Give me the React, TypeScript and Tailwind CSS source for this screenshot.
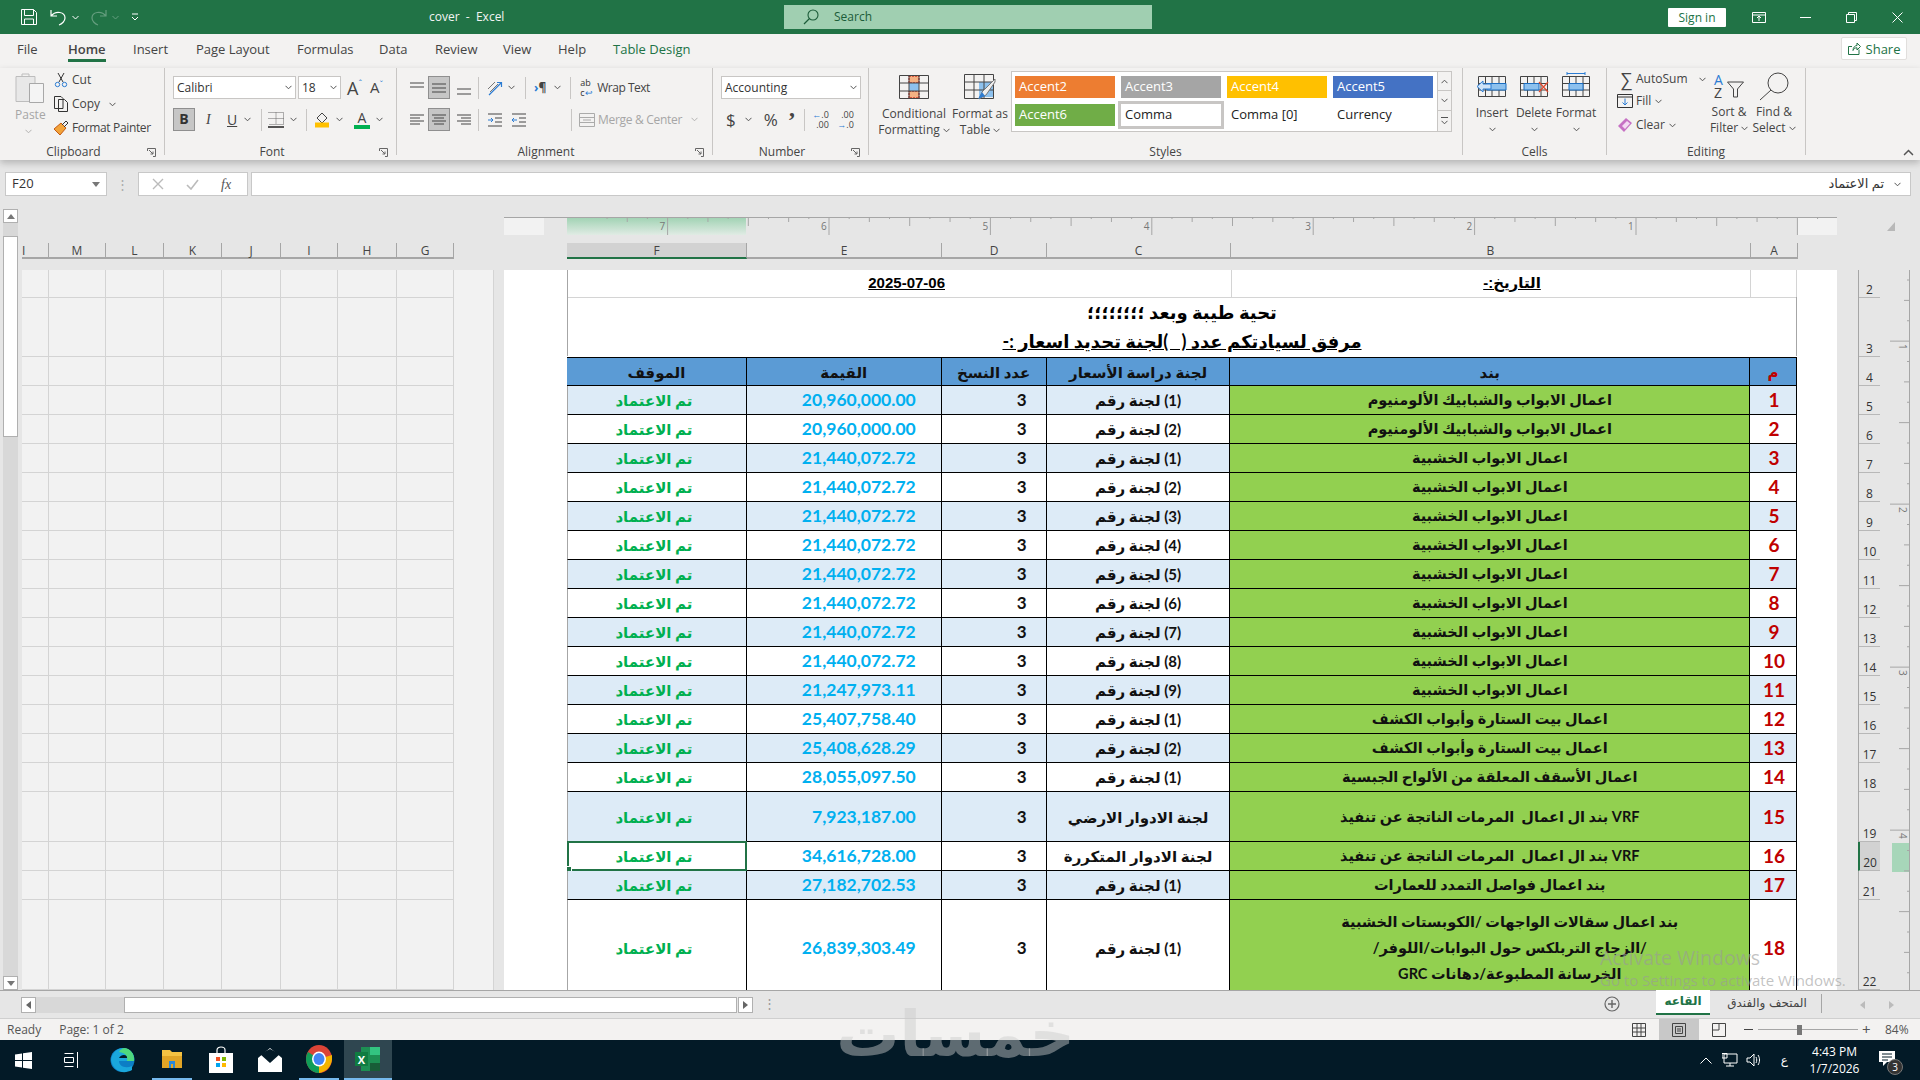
import type { ReactNode } from "react";

const ROW_H = [28, 59, 29, 29, 29, 29, 29, 29, 29, 29, 29, 29, 29, 29, 29, 29, 29, 50, 29, 29, 90];
const ROW_NUMS = [2, 3, 4, 5, 6, 7, 8, 9, 10, 11, 12, 13, 14, 15, 16, 17, 18, 19, 20, 21, 22];
const LEFT_COLS = [["I", 27], ["M", 57], ["L", 58], ["K", 58], ["J", 59], ["I", 57], ["H", 59], ["G", 57]] as const;
const RIGHT_COLS = [["F", 180], ["E", 195], ["D", 105], ["C", 184], ["B", 520], ["A", 47]] as const;
const DOORS = "اعمال الابواب الخشبية";
const ALU = "اعمال الابواب والشبابيك الألومنيوم";
const KASHF = "اعمال بيت الستارة وأبواب الكشف";
const VRF = "VRF بند ال اعمال  المرمات الناتجة عن تنفيذ";

const ROWS: { b: ReactNode; c: string; e: string; h: string; shift?: boolean }[] = [
  { b: ALU, c: "(1) لجنة رقم", e: "20,960,000.00", h: "h-[29px]" },
  { b: ALU, c: "(2) لجنة رقم", e: "20,960,000.00", h: "h-[29px]" },
  { b: DOORS, c: "(1) لجنة رقم", e: "21,440,072.72", h: "h-[29px]" },
  { b: DOORS, c: "(2) لجنة رقم", e: "21,440,072.72", h: "h-[29px]" },
  { b: DOORS, c: "(3) لجنة رقم", e: "21,440,072.72", h: "h-[29px]" },
  { b: DOORS, c: "(4) لجنة رقم", e: "21,440,072.72", h: "h-[29px]" },
  { b: DOORS, c: "(5) لجنة رقم", e: "21,440,072.72", h: "h-[29px]" },
  { b: DOORS, c: "(6) لجنة رقم", e: "21,440,072.72", h: "h-[29px]" },
  { b: DOORS, c: "(7) لجنة رقم", e: "21,440,072.72", h: "h-[29px]" },
  { b: DOORS, c: "(8) لجنة رقم", e: "21,440,072.72", h: "h-[29px]" },
  { b: DOORS, c: "(9) لجنة رقم", e: "21,247,973.11", h: "h-[29px]" },
  { b: KASHF, c: "(1) لجنة رقم", e: "25,407,758.40", h: "h-[29px]" },
  { b: KASHF, c: "(2) لجنة رقم", e: "25,408,628.29", h: "h-[29px]" },
  { b: "اعمال الأسقف المعلقة من الألواح الجبسية", c: "(1) لجنة رقم", e: "28,055,097.50", h: "h-[29px]" },
  { b: VRF, c: "لجنة الادوار الارضي", e: "7,923,187.00", h: "h-[50px]" },
  { b: VRF, c: "لجنة الادوار المتكررة", e: "34,616,728.00", h: "h-[29px]" },
  { b: "بند اعمال فواصل التمدد للعمارات", c: "(1) لجنة رقم", e: "27,182,702.53", h: "h-[29px]" },
  {
    b: (
      <>
        بند اعمال سقالات الواجهات /الكوبستات الخشبية
        <br />
        /الزجاج التربلكس حول البوابات/اللوفر/
        <br />
        الخرسانة المطبوعة/دهانات GRC
      </>
    ),
    c: "(1) لجنة رقم",
    e: "26,839,303.49",
    h: "h-[96px]",
    shift: true,
  },
];

function Caret({ className = "" }: { className?: string }) {
  return (
    <svg width="7" height="5" viewBox="0 0 7 5" className={className}>
      <path d="M.5 .8 3.5 3.8 6.5 .8" fill="none" stroke="#555" strokeWidth="1" />
    </svg>
  );
}

function Launcher() {
  return (
    <svg width="9" height="9" viewBox="0 0 9 9">
      <path d="M.5 3V.5H8.5V8.5H6M2 2 6 6M6 3.5V6H3.5" fill="none" stroke="#666" strokeWidth="1" />
    </svg>
  );
}

function Group({ label, w, launcher, children }: { label: string; w: string; launcher?: boolean; children: ReactNode }) {
  return (
    <div className={`${w} h-[87px] shrink-0 flex flex-col border-r border-[#c8c6c4]`}>
      <div className="h-[76px]">{children}</div>
      <div className="h-[11px] flex text-[12px] leading-[16px] text-[#444]">
        <span className="flex-1 text-center">{label}</span>
        {launcher && (
          <span className="w-[17px] pt-[4px]">
            <Launcher />
          </span>
        )}
      </div>
    </div>
  );
}

function Lines({ ys, widths }: { ys: number[]; widths: [number, number][] }) {
  return (
    <svg width="16" height="16" viewBox="0 0 16 16">
      {ys.map((y, i) => (
        <line key={i} x1={widths[i][0]} x2={widths[i][1]} y1={y} y2={y} stroke="#444" strokeWidth="1" />
      ))}
    </svg>
  );
}

function AlignBtn({ active, children, className = "" }: { active?: boolean; children: ReactNode; className?: string }) {
  return (
    <div
      className={`w-[22px] h-[23px] flex items-center justify-center ${
        active ? "bg-[#c6c6c6] border border-[#8f8f8f]" : ""
      } ${className}`}
    >
      {children}
    </div>
  );
}

function Sep({ className = "" }: { className?: string }) {
  return <div className={`w-px h-[22px] bg-[#c8c6c4] ${className}`} />;
}

function SheetGridIcon({ children }: { children: ReactNode }) {
  return (
    <svg width="30" height="26" viewBox="0 0 30 26">
      <path
        d="M1.5 4.5H28.500V24.500H1.500ZM1.500 11.500H28.500M1.500 18H28.500M8.500 4.500V24.500M15 4.500V24.500M22 4.500V24.500"
        fill="none"
        stroke="#444"
        strokeWidth="1"
      />
      {children}
    </svg>
  );
}

function TitleBar() {
  return (
    <div className="h-[34px] shrink-0 bg-[#217346] flex items-center text-white text-[12px] relative">
      <svg width="16" height="16" viewBox="0 0 16 16" className="ml-[21px]">
        <path
          d="M.5 .5H12.5L15.5 3.5V15.5H.5ZM3.5 .5V6.5H12.5V.5M3.5 15.5V10H12.5V15.5"
          fill="none"
          stroke="#fff"
          strokeWidth="1"
        />
      </svg>
      <svg width="16" height="17" viewBox="0 0 16 17" className="ml-[13px]">
        <path d="M1 1V7H7M1 7C6 1 15 3 15 9C15 12 12 15 9 16" fill="none" stroke="#fff" strokeWidth="1.2" />
      </svg>
      <svg width="7" height="5" viewBox="0 0 7 5" className="ml-[6px]">
        <path d="M.5 1 3.5 4 6.5 1" fill="none" stroke="#fff" />
      </svg>
      <svg width="16" height="17" viewBox="0 0 16 17" className="ml-[12px] opacity-30">
        <path d="M15 1V7H9M15 7C10 1 1 3 1 9C1 12 4 15 7 16" fill="none" stroke="#fff" strokeWidth="1.2" />
      </svg>
      <svg width="7" height="5" viewBox="0 0 7 5" className="ml-[5px] opacity-30">
        <path d="M.5 1 3.5 4 6.5 1" fill="none" stroke="#fff" />
      </svg>
      <svg width="8" height="8" viewBox="0 0 8 8" className="ml-[12px]">
        <path d="M1 1H7M1 4 4 7 7 4" fill="none" stroke="#fff" />
      </svg>
      <span className="ml-[290px] w-[355px] whitespace-pre text-[12px] text-[#f3f3f3]">cover  -  Excel</span>
      <div className="w-[368px] h-[24px] bg-[#a0cfb1] flex items-center text-[#1c5c39] text-[12px]">
        <svg width="16" height="16" viewBox="0 0 16 16" className="ml-[19px]" fill="none" stroke="#1c5c39">
          <circle cx="10" cy="6" r="5" strokeWidth="1.1" />
          <path d="M6.5 9.5 1 15" strokeWidth="1.2" />
        </svg>
        <span className="ml-[15px]">Search</span>
      </div>
      <div className="ml-[516px] w-[58px] h-[19px] bg-white rounded-[1px] text-[#217346] text-[12px] leading-[19px] text-center">
        Sign in
      </div>
      <svg width="14" height="11" viewBox="0 0 14 11" className="ml-[26px]" fill="none" stroke="#fff">
        <path d="M.5 .5H13.5V10.5H.5ZM.5 3H13.5M7 9V4.5M5 6 7 4 9 6" />
      </svg>
      <div className="ml-[34px] w-[11px] h-px bg-white" />
      <svg width="11" height="11" viewBox="0 0 11 11" className="ml-[35px]" fill="none" stroke="#fff">
        <path d="M.5 2.5H8.5V10.5H.5ZM2.5 2.5V.5H10.5V8.5H8.5" />
      </svg>
      <svg width="11" height="11" viewBox="0 0 11 11" className="ml-[35px]" fill="none" stroke="#fff">
        <path d="M.5 .5 10.5 10.5M10.5 .5 .5 10.5" />
      </svg>
    </div>
  );
}

function TabBar() {
  const tabs: [string, string][] = [
    ["File", "w-[51px]"],
    ["Home", "w-[65px]"],
    ["Insert", "w-[63px]"],
    ["Page Layout", "w-[101px]"],
    ["Formulas", "w-[82px]"],
    ["Data", "w-[56px]"],
    ["Review", "w-[68px]"],
    ["View", "w-[55px]"],
    ["Help", "w-[55px]"],
  ];
  return (
    <div className="h-[34px] shrink-0 bg-[#f3f2f1] flex text-[13px] leading-[30px] text-[#444] pl-[17px]">
      {tabs.map(([t, w]) =>
        t === "Home" ? (
          <div key={t} className={w}>
            <div className="inline-block h-[28px] border-b-[3px] border-[#217346] font-semibold">{t}</div>
          </div>
        ) : (
          <div key={t} className={w}>
            {t}
          </div>
        ),
      )}
      <div className="text-[#217346]">Table Design</div>
      <div className="ml-auto mr-[13px] mt-[3px] w-[66px] h-[23px] bg-white border border-[#e1dfdd] rounded-[2px] flex items-center justify-center gap-[5px] text-[#217346] text-[13px] leading-[20px]">
        <svg width="13" height="13" viewBox="0 0 13 13" fill="none" stroke="#217346">
          <path d="M11 7.5V12.5H.5V4.5H4M5 8.5C5 5.5 7 3.5 9 3.5V1L12.5 4.5 9 8V5.8C7 5.8 6 6.5 5 8.5Z" />
        </svg>
        Share
      </div>
    </div>
  );
}

function Ribbon() {
  return (
    <div className="h-[92px] shrink-0 bg-[#f3f2f1] flex text-[12px] text-[#444] leading-[16px] shadow-[0_3px_7px_rgba(0,0,0,0.22)] relative z-10">
      <Group label="Clipboard" w="w-[165px]" launcher>
        <div className="flex pl-[15px]">
          <div className="w-[38px] flex flex-col items-start text-[#a6a6a6]">
            <svg width="29" height="31" viewBox="0 0 29 31" className="mt-[4px]" fill="none" stroke="#bdbdbd">
              <path d="M1 4.5H20V29.5H1Z" fill="#e8e8e8" />
              <path d="M7 4.5V2H14V4.5" />
              <path d="M14.5 11.5H28.5V30.5H14.5Z" fill="#f4f4f4" stroke="#a8a8a8" />
            </svg>
            <span className="mt-[4px]">Paste</span>
            <Caret className="mt-[6px] ml-[10px] opacity-40" />
          </div>
          <div className="flex flex-col">
            <div className="h-[24px] flex items-center">
              <svg width="16" height="16" viewBox="0 0 16 16" fill="none" stroke="#333" strokeWidth="1">
                <path d="M5 1 10 10M11 1 6 10" />
                <circle cx="4.5" cy="12.5" r="2.2" stroke="#2b7cd3" />
                <circle cx="11.5" cy="12.5" r="2.2" stroke="#2b7cd3" />
              </svg>
              <span className="ml-[3px]">Cut</span>
            </div>
            <div className="h-[24px] flex items-center">
              <svg width="16" height="16" viewBox="0 0 16 16" fill="none" stroke="#333">
                <path d="M1.5 .5H8L10 2.5V12.5H1.5ZM5.5 3.5H11.5L14.5 6.5V15.5H5.5Z" fill="#f3f2f1" />
              </svg>
              <span className="ml-[3px]">Copy</span>
              <Caret className="ml-[9px]" />
            </div>
            <div className="h-[24px] flex items-center">
              <svg width="16" height="16" viewBox="0 0 16 16">
                <path d="M1 9 8 3 13 8 7 15Z" fill="#f2a33a" stroke="#c55a11" />
                <path d="M9 5 13 1 15 3 11 7" fill="none" stroke="#333" />
              </svg>
              <span className="ml-[3px] whitespace-nowrap tracking-[-0.35px]">Format Painter</span>
            </div>
          </div>
        </div>
      </Group>

      <Group label="Font" w="w-[232px]" launcher>
        <div className="pl-[8px] pt-[8px] flex flex-col gap-[9px]">
          <div className="flex items-center h-[23px]">
            <div className="w-[123px] h-[23px] bg-white border border-[#c8c6c4] flex items-center justify-between px-[3px] text-[#333]">
              Calibri <Caret />
            </div>
            <div className="ml-[2px] w-[43px] h-[23px] bg-white border border-[#c8c6c4] flex items-center justify-between px-[3px] text-[#333]">
              18 <Caret />
            </div>
            <span className="ml-[6px] text-[18px] leading-none text-[#444] relative">
              A<span className="text-[#2b7cd3] text-[9px] align-top">ˆ</span>
            </span>
            <span className="ml-[8px] text-[15px] leading-none text-[#444] relative">
              A<span className="text-[#2b7cd3] text-[9px] align-top">ˇ</span>
            </span>
          </div>
          <div className="flex items-center h-[23px]">
            <div className="w-[22px] h-[23px] bg-[#c6c6c6] border border-[#8f8f8f] text-center font-bold text-[14px] leading-[20px] text-[#333]">
              B
            </div>
            <span className="ml-[11px] italic text-[14px] w-[8px] font-['Liberation_Serif',serif]">I</span>
            <span className="ml-[13px] underline text-[14px] w-[9px]">U</span>
            <Caret className="ml-[8px]" />
            <Sep className="ml-[10px]" />
            <svg width="16" height="16" viewBox="0 0 16 16" className="ml-[6px]">
              <path d="M.5 .5H15.5V12.5H.5M8 .5V12.5M.5 6.5H15.5" fill="none" stroke="#666" strokeDasharray="1 1" />
              <path d="M0 15H16" stroke="#111" strokeWidth="1.4" />
            </svg>
            <Caret className="ml-[6px]" />
            <Sep className="ml-[9px]" />
            <svg width="16" height="18" viewBox="0 0 16 18" className="ml-[7px]">
              <path d="M3 7 8 2 13 7 8 12Z" fill="none" stroke="#444" />
              <path d="M1 14H15" stroke="#ffc000" strokeWidth="5" />
            </svg>
            <Caret className="ml-[6px]" />
            <div className="ml-[11px] w-[16px] flex flex-col items-center">
              <span className="text-[14px] leading-[14px] text-[#444]">A</span>
              <div className="w-[16px] h-[4px] bg-[#00b050]" />
            </div>
            <Caret className="ml-[6px]" />
          </div>
        </div>
      </Group>

      <Group label="Alignment" w="w-[316px]" launcher>
        <div className="pl-[9px] pt-[8px] flex flex-col gap-[9px]">
          <div className="flex items-center h-[23px]">
            <AlignBtn>
              <Lines ys={[3, 7]} widths={[[1, 15], [1, 15]]} />
            </AlignBtn>
            <AlignBtn active>
              <Lines ys={[4, 8, 12]} widths={[[1, 15], [1, 15], [1, 15]]} />
            </AlignBtn>
            <AlignBtn className="ml-[3px]">
              <Lines ys={[9, 14]} widths={[[1, 15], [1, 15]]} />
            </AlignBtn>
            <Sep className="ml-[3px]" />
            <svg width="16" height="16" viewBox="0 0 16 16" className="ml-[8px]" fill="none">
              <path d="M1 9 8 2M3 12 11 4" stroke="#777" />
              <path d="M2 15 14 3M10 2.5H14.5V7" stroke="#2b7cd3" strokeWidth="1.2" />
            </svg>
            <Caret className="ml-[5px]" />
            <Sep className="ml-[10px]" />
            <span className="ml-[8px] text-[12px] font-bold leading-none">
              <span className="text-[#2b7cd3]">›</span>¶
            </span>
            <Caret className="ml-[8px]" />
            <Sep className="ml-[9px]" />
            <span className="ml-[9px] text-[9px] leading-[10px] w-[17px] text-[#333]">
              ab
              <br />c<span className="text-[#2b7cd3]">↩</span>
            </span>
            <span className="tracking-[-0.5px]">Wrap Text</span>
          </div>
          <div className="flex items-center h-[23px]">
            <AlignBtn>
              <Lines ys={[3, 6, 9, 12]} widths={[[1, 15], [1, 11], [1, 15], [1, 11]]} />
            </AlignBtn>
            <AlignBtn active>
              <Lines ys={[3, 6, 9, 12]} widths={[[1, 15], [3, 13], [1, 15], [3, 13]]} />
            </AlignBtn>
            <AlignBtn className="ml-[3px]">
              <Lines ys={[3, 6, 9, 12]} widths={[[1, 15], [5, 15], [1, 15], [5, 15]]} />
            </AlignBtn>
            <Sep className="ml-[3px]" />
            <svg width="16" height="14" viewBox="0 0 16 14" className="ml-[8px]" fill="none">
              <path d="M1 1H15M8 5H15M8 9H15M1 13H15" stroke="#444" />
              <path d="M1 7H6M4 5 6 7 4 9" stroke="#2b7cd3" />
            </svg>
            <svg width="16" height="14" viewBox="0 0 16 14" className="ml-[8px]" fill="none">
              <path d="M1 1H15M8 5H15M8 9H15M1 13H15" stroke="#444" />
              <path d="M6 7H1M3 5 1 7 3 9" stroke="#2b7cd3" />
            </svg>
            <Sep className="ml-[44px]" />
            <svg width="16" height="14" viewBox="0 0 16 14" className="ml-[7px] opacity-50" fill="none" stroke="#666">
              <path d="M.5 .5H15.5V13.5H.5ZM.5 4.5H15.5M.5 9.5H15.5M4 7H12" />
            </svg>
            <span className="ml-[3px] text-[#a6a6a6] whitespace-nowrap tracking-[-0.3px]">Merge &amp; Center</span>
            <Caret className="ml-[9px] opacity-40" />
          </div>
        </div>
      </Group>

      <Group label="Number" w="w-[156px]" launcher>
        <div className="pl-[8px] pt-[8px] flex flex-col gap-[9px]">
          <div className="w-[140px] h-[23px] bg-white border border-[#c8c6c4] flex items-center justify-between px-[3px] text-[#333]">
            Accounting <Caret />
          </div>
          <div className="flex items-center h-[23px] text-[#444]">
            <span className="ml-[5px] text-[17px] leading-none">$</span>
            <Caret className="ml-[9px]" />
            <span className="ml-[12px] text-[17px] leading-none">%</span>
            <span className="ml-[10px] text-[24px] font-bold leading-[12px] font-['Liberation_Serif',serif]">’</span>
            <Sep className="ml-[8px]" />
            <span className="ml-[7px] text-[9px] leading-[10px] w-[17px] text-right">
              <span className="text-[#2b7cd3]">←</span>.0
              <br />
              .00
            </span>
            <span className="ml-[8px] text-[9px] leading-[10px] w-[17px] text-right">
              .00
              <br />
              <span className="text-[#2b7cd3]">→</span>.0
            </span>
          </div>
        </div>
      </Group>

      <Group label="Styles" w="w-[594px]">
        <div className="flex h-full">
          <div className="ml-[15px] w-[60px] flex flex-col items-center">
            <svg width="30" height="24" viewBox="0 0 30 24" className="mt-[7px]">
              <path d="M10 1H20V8H10ZM10 16H20V23H10Z" fill="#f4b183" stroke="#c00000" strokeDasharray="2 1" />
              <path d="M10 8H20V16H10Z" fill="#8dc1ee" />
              <path d="M.5 .5H29.5V23.5H.5ZM.5 8H29.5M.5 16H29.5M10 .5V23.5M20 .5V23.5" fill="none" stroke="#444" />
            </svg>
            <span className="mt-[7px]">Conditional</span>
            <span className="whitespace-nowrap flex items-center gap-[3px]">
              Formatting <Caret />
            </span>
          </div>
          <div className="ml-[6px] w-[60px] flex flex-col items-center">
            <svg width="32" height="26" viewBox="0 0 32 26" className="mt-[6px]">
              <path d="M15 8H22V23H15ZM22 8H30V23H22Z" fill="#8dc1ee" />
              <path d="M.5 .5H29.5V24.5H.5ZM.5 8H29.5M.5 16H29.5M10 .5V24.5M20 .5V24.5" fill="none" stroke="#444" />
              <path d="M31 5 18 18 15 25 22 21 31 8Z" fill="#eee" stroke="#777" />
              <path d="M18 18 14 25 21 22Z" fill="#2b7cd3" />
            </svg>
            <span className="mt-[6px]">Format as</span>
            <span className="flex items-center gap-[3px]">
              Table <Caret />
            </span>
          </div>
          <div className="ml-[1px] mt-[3px] w-[441px] h-[61px] bg-white border border-[#c8c6c4] flex pl-[3px] pt-[4px] text-[13px] leading-[21px]">
            <div className="grid grid-cols-[100px_100px_100px_100px] gap-[6px] auto-rows-[22px]">
              <div className="bg-[#ed7d31] text-white pl-[4px]">Accent2</div>
              <div className="bg-[#a5a5a5] text-white pl-[4px]">Accent3</div>
              <div className="bg-[#ffc000] text-white pl-[4px]">Accent4</div>
              <div className="bg-[#4472c4] text-white pl-[4px]">Accent5</div>
              <div className="bg-[#70ad47] text-white pl-[4px]">Accent6</div>
              <div className="bg-white text-[#222] pl-[4px] outline-[3px] outline-[#c8c6c4]">Comma</div>
              <div className="text-[#222] pl-[4px]">Comma [0]</div>
              <div className="text-[#222] pl-[4px]">Currency</div>
            </div>
            <div className="ml-auto -mt-[5px] w-[15px] h-[61px] flex flex-col bg-[#f3f2f1] border-l border-[#c8c6c4] -mr-px">
              <div className="h-[20px] border border-l-0 border-[#c8c6c4] flex items-center justify-center">
                <Caret className="rotate-180" />
              </div>
              <div className="h-[19px] border-r border-[#c8c6c4] flex items-center justify-center">
                <Caret />
              </div>
              <div className="h-[22px] border border-l-0 border-[#c8c6c4] flex flex-col items-center justify-center gap-[2px]">
                <div className="w-[7px] h-px bg-[#555]" />
                <Caret />
              </div>
            </div>
          </div>
        </div>
      </Group>

      <Group label="Cells" w="w-[144px]">
        <div className="flex pl-[8px]">
          {[
            {
              t: "Insert",
              i: (
                <SheetGridIcon>
                  <path d="M10 11.500H29V18H10Z" fill="#8dc1ee" stroke="#1b6ec2" />
                  <path d="M0 14.500 6 9V12H14V17H6V20Z" fill="#cfe3f7" stroke="#2b7cd3" />
                </SheetGridIcon>
              ),
            },
            {
              t: "Delete",
              i: (
                <SheetGridIcon>
                  <path d="M5 11.500H20V18H5Z" fill="#8dc1ee" stroke="#1b6ec2" />
                  <path d="M20 10 29 20M29 10 20 20" stroke="#e0492e" strokeWidth="1.2" />
                </SheetGridIcon>
              ),
            },
            {
              t: "Format",
              i: (
                <SheetGridIcon>
                  <path d="M8 11.500H22V18H8Z" fill="#8dc1ee" stroke="#1b6ec2" />
                  <path d="M6 1.5H24M6 0V3M24 0V3" stroke="#2b7cd3" />
                </SheetGridIcon>
              ),
            },
          ].map(({ t, i }) => (
            <div key={t} className="w-[42px] flex flex-col items-center">
              <div className="mt-[4px] h-[30px]">{i}</div>
              <span className="mt-[3px]">{t}</span>
              <Caret className="mt-[6px]" />
            </div>
          ))}
        </div>
      </Group>

      <Group label="Editing" w="w-[199px]">
        <div className="flex pl-[10px]">
          <div className="w-[90px] flex flex-col">
            <div className="h-[22px] flex items-center">
              <span className="w-[19px] text-[18px] leading-none text-center text-[#444]">∑</span>
              <span>AutoSum</span>
              <Caret className="ml-[11px]" />
            </div>
            <div className="h-[22px] flex items-center">
              <svg width="16" height="14" viewBox="0 0 16 14" className="mr-[3px]" fill="none">
                <path d="M.5 .5H15.5V13.5H.5ZM.5 3H15.5" stroke="#333" />
                <path d="M8 4.5V11M5.5 8.5 8 11 10.5 8.5" stroke="#2b7cd3" />
              </svg>
              <span>Fill</span>
              <Caret className="ml-[4px]" />
            </div>
            <div className="h-[26px] flex items-center">
              <svg width="16" height="16" viewBox="0 0 16 16" className="mr-[3px]">
                <path d="M1 9 9 1 15 6 7 15Z" fill="#c671c4" />
                <path d="M5 9 10 4 13 6.5 8 12Z" fill="#f3d9f2" />
              </svg>
              <span>Clear</span>
              <Caret className="ml-[4px]" />
            </div>
          </div>
          <div className="w-[44px] flex flex-col items-center">
            <div className="mt-[5px] h-[27px] w-[30px] flex">
              <div className="w-[13px] flex flex-col text-[14px] leading-[13px]">
                <span className="text-[#2b7cd3]">A</span>
                <span className="text-[#444]">Z</span>
              </div>
              <svg width="17" height="27" viewBox="0 0 17 27" fill="none">
                <path d="M.5 9H16.5L10.500 16V24H6.500V16Z" stroke="#444" />
              </svg>
            </div>
            <span className="mt-[4px]">Sort &amp;</span>
            <span className="flex items-center gap-[3px]">
              Filter <Caret />
            </span>
          </div>
          <div className="w-[46px] flex flex-col items-center">
            <svg width="30" height="29" viewBox="0 0 30 29" className="mt-[4px]" fill="none" stroke="#444">
              <circle cx="19" cy="11" r="10" />
              <path d="M12 18 1 28" />
            </svg>
            <span className="mt-[3px]">Find &amp;</span>
            <span className="flex items-center gap-[3px]">
              Select <Caret />
            </span>
          </div>
        </div>
      </Group>
      <div className="flex-1 flex items-end justify-end pr-[8px] pb-[5px]">
        <Caret className="rotate-180 scale-150" />
      </div>
    </div>
  );
}

function FormulaBar() {
  return (
    <div className="h-[37px] shrink-0 bg-[#e6e6e6] pt-[12px] flex text-[13px] text-[#333]">
      <div className="ml-[5px] w-[102px] h-[24px] bg-white border border-[#c8c8c8] flex items-center justify-between px-[6px]">
        F20
        <span className="w-0 h-0 border-x-[4px] border-x-transparent border-t-[5px] border-t-[#777]" />
      </div>
      <div className="w-[31px] flex items-center justify-center text-[#aaa] tracking-tight">⋮</div>
      <div className="w-[110px] h-[24px] bg-white border border-[#c8c8c8] flex items-center pl-[13px] gap-[22px] text-[#b5b5b5]">
        <svg width="12" height="12" viewBox="0 0 12 12" fill="none" stroke="#bbb" strokeWidth="1.4">
          <path d="M1 1 11 11M11 1 1 11" />
        </svg>
        <svg width="13" height="11" viewBox="0 0 13 11" fill="none" stroke="#bbb" strokeWidth="1.6">
          <path d="M1 6 5 10 12 1" />
        </svg>
        <span className="italic text-[#555] font-['Liberation_Serif',serif] text-[14px]">fx</span>
      </div>
      <div className="ml-[3px] w-[1660px] h-[24px] bg-white border border-[#c8c8c8] flex items-center justify-end pr-[9px] text-[13px]">
        <span dir="rtl" className="font-['Noto_Sans','DejaVu_Sans',sans-serif]">
          تم الاعتماد
        </span>
        <Caret className="ml-[10px]" />
      </div>
    </div>
  );
}

function HRuler() {
  const ticks: ReactNode[] = [];
  for (let i = -3; i < 70; i++) {
    const x = 163.6 + (i * 161.4) / 8;
    if (x < 1 || x > 1332) continue;
    const h = i % 8 === 0 ? 18 : i % 4 === 0 ? 9 : i % 2 === 0 ? 5 : 2;
    ticks.push(<line key={i} x1={x} x2={x} y1={0} y2={h} stroke="#a6a6a6" />);
  }
  return (
    <svg width="1333" height="18" viewBox="0 0 1333 18" className="block">
      <rect x="0" y="0" width="40" height="18" fill="#f2f2f2" />
      <rect x="1293" y="0" width="40" height="18" fill="#f2f2f2" />
      <defs>
        <linearGradient id="sel" x1="0" y1="0" x2="0" y2="1">
          <stop offset="0" stopColor="#9fd2b2" />
          <stop offset="1" stopColor="#e0ebe4" />
        </linearGradient>
      </defs>
      <rect x="63" y="0" width="179" height="18" fill="url(#sel)" />
      <line x1="0" x2="1333" y1="0.5" y2="0.5" stroke="#a6a6a6" />
      {ticks}
      {[7, 6, 5, 4, 3, 2, 1].map((n, i) => (
        <text key={n} x={163.6 + i * 161.4 - 8} y="13" fontSize="10" fill="#777" fontFamily="Open Sans">
          {n}
        </text>
      ))}
    </svg>
  );
}

function VRuler() {
  const ticks: ReactNode[] = [];
  for (let i = 0; i < 36; i++) {
    const y = 10 + (i * 163) / 8;
    const k = i - 3;
    const w = k % 8 === 0 ? 19 : k % 4 === 0 ? 10 : k % 2 === 0 ? 5 : 2;
    ticks.push(<line key={i} x1={19 - w} x2={19} y1={y} y2={y} stroke="#a6a6a6" />);
  }
  return (
    <svg width="20" height="720" viewBox="0 0 20 720" className="block">
      <rect x="2" y="573" width="17" height="29" fill="#a7d6b9" />
      <line x1="19.5" x2="19.5" y1="0" y2="720" stroke="#a6a6a6" />
      {ticks}
      {[1, 2, 3, 4].map((n, i) => (
        <text
          key={n}
          x="0"
          y="0"
          fontSize="10"
          fill="#777"
          fontFamily="Open Sans"
          transform={`translate(9 ${74 + i * 163}) rotate(90)`}
        >
          {n}
        </text>
      ))}
    </svg>
  );
}

function SheetRow({ r, i }: { r: (typeof ROWS)[number]; i: number }) {
  const band = i % 2 === 0 ? "bg-[#ddebf7]" : "bg-white";
  const cell = "border-r border-b border-black flex items-center justify-center";
  const selected = i === 15;
  return (
    <div className={`flex font-bold text-[15px] leading-[26px] ${r.h}`}>
      <div dir="rtl" className={`${cell} ${band} w-[180px] pr-[6px] border-l border-l-[#a6a6a6] text-[#00b050] relative`}>
        تم الاعتماد
        {selected && (
          <div className="absolute -left-px -top-px -right-px -bottom-px border-2 border-[#217346]">
            <div className="absolute -left-[3px] -bottom-[3px] w-[6px] h-[6px] bg-[#217346] border border-white" />
          </div>
        )}
      </div>
      <div className={`${cell} ${band} w-[195px] !justify-end pr-[25px] text-[#00b0f0] text-[17.5px]`}>{r.e}</div>
      <div className={`${cell} ${band} w-[105px] !justify-end pr-[19px] text-[#111] text-[17px]`}>3</div>
      <div dir="rtl" className={`${cell} ${band} w-[184px] text-[#111]`}>
        {r.c}
      </div>
      <div dir="rtl" className={`${cell} bg-[#92d050] w-[520px] text-[#111] text-center whitespace-pre-wrap text-[14.5px]`}>
        <span className={r.shift ? "ml-[40px]" : ""}>{r.b}</span>
      </div>
      <div className={`${cell} ${band} w-[47px] pl-[2px] text-[#c00000] text-[19px]`}>{i + 1}</div>
    </div>
  );
}

function Sheet() {
  return (
    <div className="flex-1 min-h-0 flex bg-[#e6e6e6] font-['Lato','DejaVu_Sans',sans-serif]">
      {/* left scrollbar */}
      <div className="w-[22px] pl-[3px] pt-[12px] flex flex-col">
        <div className="w-[15px] h-[14px] bg-white border border-[#b0b0b0] flex items-center justify-center">
          <span className="w-0 h-0 border-x-[4px] border-x-transparent border-b-[5px] border-b-[#777]" />
        </div>
        <div className="w-[15px] h-[13px] bg-[#d8d8d8]" />
        <div className="w-[15px] h-[201px] bg-white border border-[#b0b0b0]" />
        <div className="w-[15px] flex-1 bg-[#d8d8d8]" />
        <div className="w-[15px] h-[14px] bg-white border border-[#b0b0b0] flex items-center justify-center">
          <span className="w-0 h-0 border-x-[4px] border-x-transparent border-t-[5px] border-t-[#777]" />
        </div>
      </div>

      {/* sheet */}
      <div className="w-[1815px] flex flex-col">
        <div className="h-[20px]" />
        <div className="ml-[482px] h-[18px]">
          <HRuler />
        </div>
        <div className="h-[8px]" />
        <div className="flex h-[16px] text-[12px] leading-[15px] text-[#444] font-['Open_Sans',sans-serif]">
          <div className="flex border-b-2 border-[#a6a6a6]">
            {LEFT_COLS.map(([c, w], i) => (
              <div
                key={i}
                className={`border-r border-[#a6a6a6] ${
                  w === 27 ? "w-[27px] text-left" : w === 57 ? "w-[57px] text-center" : w === 58 ? "w-[58px] text-center" : "w-[59px] text-center"
                }`}
              >
                {c}
              </div>
            ))}
          </div>
          <div className="w-[113px]" />
          <div className="flex border-b-2 border-[#a6a6a6]">
            {RIGHT_COLS.map(([c, w]) => (
              <div
                key={c}
                className={`text-center border-r border-[#a6a6a6] ${
                  c === "F"
                    ? "w-[180px] bg-[#d2d2d2] -mb-[2px] border-b-2 border-b-[#217346]"
                    : w === 195
                      ? "w-[195px]"
                      : w === 105
                        ? "w-[105px]"
                        : w === 184
                          ? "w-[184px]"
                          : w === 520
                            ? "w-[520px]"
                            : "w-[47px]"
                }`}
              >
                {c}
              </div>
            ))}
          </div>
        </div>
        <div className="h-[11px]" />
        <div className="flex-1 min-h-0 flex overflow-hidden">
          <div className="w-[432px] bg-[#f2f2f2] flex flex-col">
            {ROW_H.map((h, i) => (
              <div key={i} className="flex border-b border-[#d4d4d4] shrink-0" style={{ height: h }}>
                {LEFT_COLS.map(([, w], j) => (
                  <div key={j} className="border-r border-[#d4d4d4]" style={{ width: w }} />
                ))}
              </div>
            ))}
          </div>
          <div className="w-[40px] bg-[#f2f2f2] border-r border-[#d4d4d4]" />
          <div className="w-[10px] bg-[#e6e6e6]" />
          <div className="w-[1333px] bg-white pl-[63px] pr-[40px] overflow-hidden">
            <div className="flex h-[28px] border-b border-[#d4d4d4] text-[15px] font-bold leading-[26px] font-['Liberation_Sans','DejaVu_Sans',sans-serif] text-black border-l border-l-[#a6a6a6] border-r border-r-[#d4d4d4]">
              <div className="w-[479px] pr-[102px] text-right">
                <span className="underline">2025-07-06</span>
              </div>
              <div className="w-[184px]" />
              <div dir="rtl" className="w-[520px] border-x border-[#d4d4d4] text-center pl-[42px]">
                <span className="underline">التاريخ:-</span>
              </div>
            </div>
            <div
              dir="rtl"
              className="h-[59px] border-x border-x-[#a6a6a6] text-center text-[18px] font-bold leading-[30px] text-black -mt-[1px]"
            >
              <div className="-mb-[1px]">تحية طيبة وبعد ؛؛؛؛؛؛؛؛</div>
              <div className="underline whitespace-pre">مرفق لسيادتكم عدد (   )لجنة تحديد اسعار :-</div>
            </div>
            <div className="flex h-[29px] mt-[1px] bg-[#5b9bd5] text-[15px] font-bold text-[#111] border-y border-black [&>div]:border-r [&>div]:border-black [&>div]:flex [&>div]:items-center [&>div]:justify-center [&>div]:pt-[2px]">
              <div className="w-[180px]">الموقف</div>
              <div className="w-[195px]">القيمة</div>
              <div className="w-[105px]">عدد النسخ</div>
              <div className="w-[184px]">لجنة دراسة الأسعار</div>
              <div className="w-[520px]">بند</div>
              <div className="w-[47px] text-[#c00000]">م</div>
            </div>
            {ROWS.map((r, i) => (
              <SheetRow key={i} r={r} i={i} />
            ))}
          </div>
        </div>
      </div>

      {/* row numbers and vertical ruler */}
      <div className="flex-1 flex flex-col">
        <div className="h-[73px] flex justify-end pr-[25px] pt-[25px]">
          <span className="w-0 h-0 border-l-[8px] border-l-transparent border-b-[9px] border-b-[#b8b8b8]" />
        </div>
        <div className="flex-1 min-h-0 flex overflow-hidden">
          <div className="ml-[21px] w-[22px] flex flex-col border-l border-[#a6a6a6] text-[12px] text-[#333] font-['Open_Sans',sans-serif]">
            {ROW_NUMS.map((n, i) => (
              <div
                key={n}
                className={`shrink-0 flex items-end justify-center leading-[15px] border-b border-[#b8b8b8] ${
                  n === 20 ? "bg-[#d2d2d2] border-l-2 border-l-[#217346] -ml-px" : ""
                }`}
                style={{ height: ROW_H[i] }}
              >
                {n}
              </div>
            ))}
          </div>
          <div className="ml-[10px]">
            <VRuler />
          </div>
        </div>
      </div>
    </div>
  );
}

function SheetTabs() {
  return (
    <div className="h-[28px] shrink-0 bg-[#e6e6e6] border-t border-[#a6a6a6] flex font-['Open_Sans',sans-serif]">
      <div className="ml-[21px] mt-[6px] w-[15px] h-[16px] bg-white border border-[#b0b0b0] flex items-center justify-center">
        <span className="w-0 h-0 border-y-[4px] border-y-transparent border-r-[5px] border-r-[#666]" />
      </div>
      <div className="mt-[6px] w-[88px] h-[16px] bg-[#d8d8d8]" />
      <div className="mt-[6px] w-[613px] h-[16px] bg-white border border-[#b0b0b0]" />
      <div className="mt-[6px] ml-px w-[15px] h-[16px] bg-white border border-[#b0b0b0] flex items-center justify-center">
        <span className="w-0 h-0 border-y-[4px] border-y-transparent border-l-[5px] border-l-[#666]" />
      </div>
      <span className="w-[14px] ml-[10px] mt-[3px] text-[#999] text-[13px]">⋮</span>
      <svg width="16" height="16" viewBox="0 0 16 16" className="ml-[827px] mt-[5px]" fill="none" stroke="#666">
        <circle cx="8" cy="8" r="7" strokeWidth="1.2" />
        <path d="M8 4V12M4 8H12" strokeWidth="1.4" />
      </svg>
      <div
        dir="rtl"
        className="ml-[36px] w-[54px] h-[25px] bg-white border-b-2 border-[#217346] text-center text-[#217346] font-bold text-[12px] leading-[23px] -mt-px font-['DejaVu_Sans',sans-serif]"
      >
        القاعه
      </div>
      <div
        dir="rtl"
        className="ml-[12px] w-[90px] h-[20px] whitespace-nowrap text-center text-[#444] text-[12px] leading-[24px] font-['DejaVu_Sans',sans-serif]"
      >
        المتحف والفندق
      </div>
      <div className="ml-[9px] mt-[3px] w-px h-[19px] bg-[#a6a6a6]" />
      <span className="ml-[38px] mt-[10px] w-0 h-0 border-y-[4px] border-y-transparent border-r-[5px] border-r-[#bbb]" />
      <span className="ml-[24px] mt-[10px] w-0 h-0 border-y-[4px] border-y-transparent border-l-[5px] border-l-[#bbb]" />
    </div>
  );
}

function StatusBar() {
  return (
    <div className="h-[22px] shrink-0 bg-[#f3f2f1] border-t border-[#cfcfcf] flex items-center text-[12px] text-[#555] font-['Open_Sans',sans-serif] whitespace-nowrap">
      <span className="ml-[7px]">Ready</span>
      <span className="ml-[18px]">Page: 1 of 2</span>
      <div className="ml-auto mr-[14px] flex items-center">
        <svg width="14" height="14" viewBox="0 0 14 14" fill="none" stroke="#444">
          <path d="M.5 .5H13.5V13.5H.5ZM.5 5H13.5M.5 9H13.5M5 .5V13.5M9 .5V13.5" />
        </svg>
        <div className="ml-[13px] w-[40px] h-[21px] bg-[#c8c8c8] flex items-center justify-center">
          <svg width="14" height="14" viewBox="0 0 14 14" fill="none" stroke="#444">
            <path d="M.5 .5H13.5V13.5H.5ZM3.5 3.5H10.5V10.5H3.5ZM5 6H9M5 8H9" />
          </svg>
        </div>
        <svg width="14" height="14" viewBox="0 0 14 14" className="ml-[13px]" fill="none" stroke="#444">
          <path d="M.5 .5H13.5V13.5H.5ZM.5 7H7V.5" />
        </svg>
        <div className="ml-[18px] w-[9px] h-px bg-[#444]" />
        <div className="ml-[5px] w-[100px] h-px bg-[#a6a6a6] flex items-center">
          <div className="ml-[39px] w-[5px] h-[10px] bg-[#777] shrink-0" />
        </div>
        <span className="ml-[4px] w-[10px] text-[15px] leading-none">+</span>
        <span className="ml-[13px] w-[21px] text-[12px]">84%</span>
      </div>
    </div>
  );
}

function Taskbar() {
  return (
    <div className="h-[40px] shrink-0 bg-[#031a27] flex items-stretch text-white font-['Open_Sans',sans-serif]">
      <div className="ml-[15px] flex items-center">
        <svg width="17" height="17" viewBox="0 0 17 17" fill="#fff">
          <path d="M0 2.4 7 1.4V8H0ZM8 1.3 17 0V8H8ZM0 9H7V15.6L0 14.6ZM8 9H17V17L8 15.7Z" />
        </svg>
      </div>
      <div className="ml-[32px] flex items-center">
        <svg width="16" height="16" viewBox="0 0 16 16" fill="none" stroke="#fff">
          <path d="M.5 1.5H9.5M.5 14.5H9.5M.5 5.5H9.5V10.5H.5ZM13.5 0V16" strokeWidth="1" />
        </svg>
      </div>
      <div className="ml-[30px] flex items-center">
        <svg width="25" height="26" viewBox="0 0 25 26">
          <circle cx="12.5" cy="13" r="12" fill="#0c7ec5" />
          <path d="M1 13C2 5 8 1 13 1C20 1 25 7 24 14H9C9 19 15 22 22 19V23C13 28 3 24 1 13Z" fill="#1aa7dc" />
          <path d="M9 11C11 7 17 7 18 11Z" fill="#031a27" />
          <path d="M14 1C20 1 25 7 24 14H17C18 9 16 6 9 5C10 3 12 1.500 14 1Z" fill="#4fd87e" />
        </svg>
      </div>
      <div className="ml-[17px] w-[40px] flex items-center justify-center border-b-2 border-[#76b9ed]">
        <svg width="22" height="22" viewBox="0 0 22 22">
          <path d="M1 2H9L11 4H21V20H1Z" fill="#f5c242" />
          <path d="M1 8H21V20H1Z" fill="#e2a526" />
          <path d="M8 13H14V20H12V16H10V20H8Z" fill="#2b88d8" />
        </svg>
      </div>
      <div className="ml-[17px] flex items-center">
        <svg width="24" height="28" viewBox="0 0 24 28">
          <path d="M8 8V4C8 0 16 0 16 4V8" fill="none" stroke="#fff" strokeWidth="1.2" />
          <path d="M0 7H24V27H0Z" fill="#fff" />
          <path d="M7 11H11V15H7Z" fill="#f25022" />
          <path d="M13 11H17V15H13Z" fill="#7fba00" />
          <path d="M7 17H11V21H7Z" fill="#00a4ef" />
          <path d="M13 17H17V21H13Z" fill="#ffb900" />
        </svg>
      </div>
      <div className="ml-[25px] flex items-center">
        <svg width="24" height="26" viewBox="0 0 24 26">
          <path d="M0 11 12 1 24 11V25H0Z" fill="#fff" />
          <path d="M2 7 12 16 22 7 12 2Z" fill="#031a27" />
        </svg>
      </div>
      <div className="ml-[17px] w-[40px] flex items-center justify-center border-b-2 border-[#76b9ed]">
        <svg width="26" height="28" viewBox="0 0 26 28">
          <ellipse cx="13" cy="14" rx="13" ry="14" fill="#db4437" />
          <path d="M13 14 26 10C27 16 24 26 13 28Z" fill="#f4b400" />
          <path d="M13 14 13 28C5 28 0 21 0 14 0 11 1 9 2 7Z" fill="#0f9d58" />
          <ellipse cx="13" cy="14" rx="7" ry="7.500" fill="#fff" />
          <ellipse cx="13" cy="14" rx="5.500" ry="6" fill="#4285f4" />
        </svg>
      </div>
      <div className="ml-[5px] w-[48px] bg-[#2f4650] flex items-center justify-center border-b-2 border-[#76b9ed]">
        <div className="relative w-[26px] h-[26px] flex items-center">
          <svg width="26" height="26" viewBox="0 0 26 26" className="absolute left-0 top-0">
            <path d="M6 1H25V25H6Z" fill="#1d8f53" />
            <path d="M15 1H25V9H15Z" fill="#33c481" />
            <path d="M15 17H25V25H15Z" fill="#185c37" />
            <path d="M0 6H13V20H0Z" fill="#107c41" />
          </svg>
          <span className="relative w-[13px] text-center text-[11px] font-bold leading-none">X</span>
        </div>
      </div>
      <div className="ml-auto flex items-center">
        <svg width="12" height="7" viewBox="0 0 12 7" fill="none" stroke="#fff">
          <path d="M.5 6.500 6 1 11.500 6.500" />
        </svg>
        <svg width="16" height="14" viewBox="0 0 16 14" className="ml-[10px]" fill="none" stroke="#fff">
          <path d="M2 1H15V10H2ZM8 10V13M4 13H12M0 .5H5V5H0Z" />
        </svg>
        <svg width="16" height="14" viewBox="0 0 16 14" className="ml-[8px]" fill="none" stroke="#fff">
          <path d="M1 5H4L8 1V13L4 9H1ZM10 4C11 6 11 8 10 10M12 2C14 5 14 9 12 12" />
        </svg>
        <span className="ml-[19px] text-[12px] font-['DejaVu_Sans',sans-serif]">ع</span>
        <div className="ml-[15px] w-[63px] text-center text-[12px] leading-[17px]">
          <div>4:43 PM</div>
          <div>1/7/2026</div>
        </div>
        <div className="ml-[13px] mr-[25px] relative mb-[3px]">
          <svg width="16" height="15" viewBox="0 0 16 15">
            <path d="M0 0H16V11H8L4 15V11H0Z" fill="#fff" />
            <path d="M3 3H13M3 6H13M3 9H9" stroke="#031a27" />
          </svg>
          <span className="absolute -right-[8px] -bottom-[9px] w-[16px] h-[16px] rounded-full bg-[#333] border border-[#777] text-[10px] leading-[14px] text-center">
            3
          </span>
        </div>
      </div>
    </div>
  );
}

export default function App() {
  return (
    <div className="w-[1920px] h-[1080px] flex flex-col overflow-hidden relative font-['Open_Sans',sans-serif]">
      <TitleBar />
      <TabBar />
      <Ribbon />
      <FormulaBar />
      <Sheet />
      <SheetTabs />
      <StatusBar />
      <Taskbar />

      {/* overlays */}
      <div className="absolute left-[1600px] top-[946px] text-[#9a9a9a]/60 pointer-events-none whitespace-nowrap">
        <div className="text-[19.5px] leading-[24px]">Activate Windows</div>
        <div className="text-[15px] leading-[20px]">Go to Settings to activate Windows.</div>
      </div>
      <div
        dir="rtl"
        className="absolute left-[845px] top-[990px] w-[230px] text-center text-[63px] leading-[90px] text-[#cacaca]/46 pointer-events-none font-['DejaVu_Sans',sans-serif] font-bold whitespace-nowrap"
      >
        خمسات
      </div>
    </div>
  );
}
